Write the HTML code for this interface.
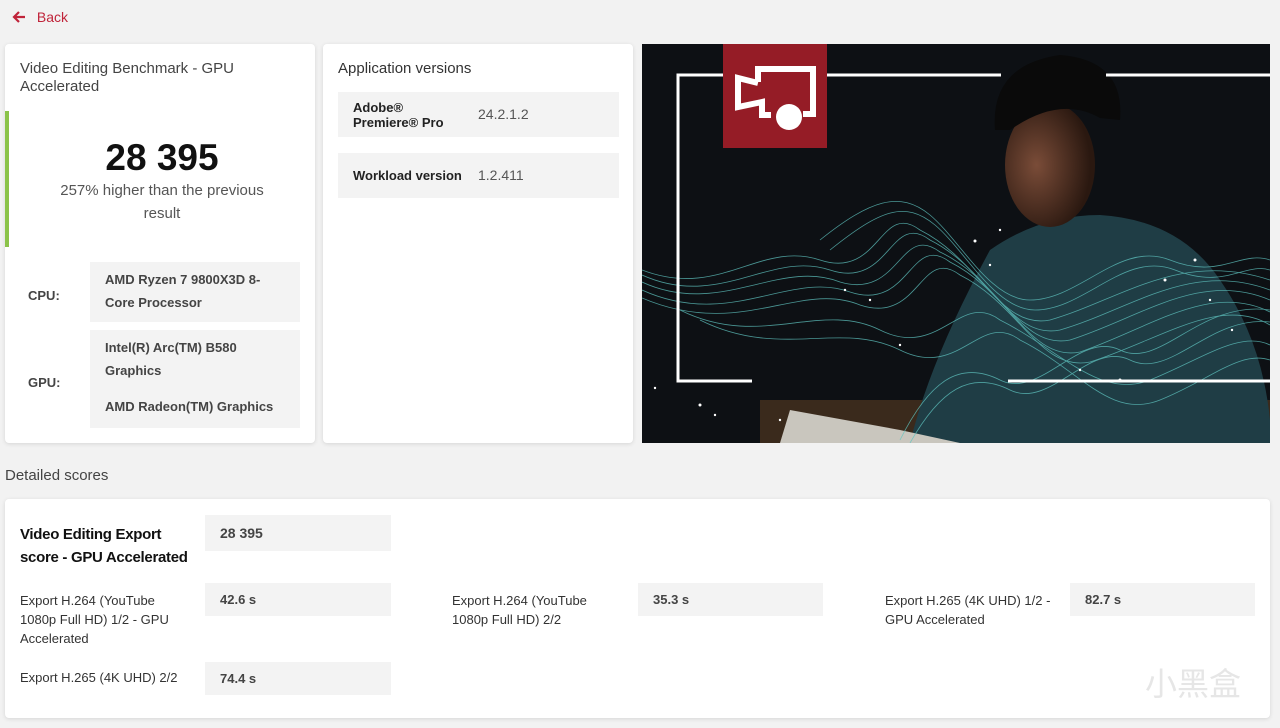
<!DOCTYPE html>
<html><head><meta charset="utf-8"><style>
*{box-sizing:border-box;margin:0;padding:0}
body{width:1280px;height:728px;background:#f2f2f2;font-family:"Liberation Sans","DejaVu Sans",sans-serif;position:relative;overflow:hidden;color:#222}
.card{position:absolute;background:#fff;border-radius:4px;box-shadow:0 1px 4px rgba(0,0,0,.12)}
.abs{position:absolute}
.grey{position:absolute;background:#f3f3f3}
.b{font-weight:bold}
</style></head><body>
<div class="abs" style="left:12px;top:9px;color:#c0243a;font-size:14px;">
<svg width="14" height="14" viewBox="0 0 14 14" style="vertical-align:-2px"><path d="M13 7H2M7 2L2 7l5 5" stroke="#c0243a" stroke-width="2.2" fill="none"/></svg>
<span style="margin-left:7px">Back</span></div>

<div class="card" style="left:5px;top:44px;width:310px;height:399px">
 <div class="abs" style="left:15px;top:16px;font-size:15px;color:#444;line-height:18px;width:260px">Video Editing Benchmark - GPU Accelerated</div>
 <div class="abs" style="left:0;top:67px;width:4px;height:136px;background:#8bc34a"></div>
 <div class="abs" style="left:0;top:93px;width:314px;text-align:center;font-size:37px;font-weight:bold;color:#111">28 395</div>
 <div class="abs" style="left:40px;top:135px;width:234px;text-align:center;font-size:15px;line-height:23px;color:#555">257% higher than the previous result</div>
 <div class="abs b" style="left:23px;top:244px;font-size:13px;color:#444">CPU:</div>
 <div class="grey" style="left:85px;top:218px;width:210px;height:60px"></div>
 <div class="abs b" style="left:100px;top:224px;font-size:13px;line-height:23px;color:#444;width:180px">AMD Ryzen 7 9800X3D 8-Core Processor</div>
 <div class="abs b" style="left:23px;top:331px;font-size:13px;color:#444">GPU:</div>
 <div class="grey" style="left:85px;top:286px;width:210px;height:98px"></div>
 <div class="abs b" style="left:100px;top:292px;font-size:13px;line-height:23px;color:#444;width:180px">Intel(R) Arc(TM) B580 Graphics</div>
 <div class="abs b" style="left:100px;top:355px;font-size:13px;color:#444">AMD Radeon(TM) Graphics</div>
</div>

<div class="card" style="left:323px;top:44px;width:310px;height:399px">
 <div class="abs" style="left:15px;top:16px;font-size:15px;color:#333">Application versions</div>
 <div class="grey" style="left:15px;top:48px;width:281px;height:45px"></div>
 <div class="abs b" style="left:30px;top:56px;font-size:13px;line-height:15px;color:#222">Adobe®<br>Premiere® Pro</div>
 <div class="abs" style="left:155px;top:62px;font-size:14px;color:#555">24.2.1.2</div>
 <div class="grey" style="left:15px;top:109px;width:281px;height:45px"></div>
 <div class="abs b" style="left:30px;top:124px;font-size:13px;color:#222">Workload version</div>
 <div class="abs" style="left:155px;top:123px;font-size:14px;color:#555">1.2.411</div>
</div>

<svg class="abs" style="left:642px;top:44px" width="628" height="399" viewBox="642 44 628 399">
 <defs>
  <radialGradient id="face" cx="0.35" cy="0.5" r="0.6"><stop offset="0" stop-color="#7a4c38"/><stop offset="1" stop-color="#2a1810"/></radialGradient>
 </defs>
 <rect x="642" y="44" width="628" height="399" fill="#0d1014"/>
 <rect x="760" y="400" width="510" height="43" fill="#3a2a1c"/>
 <path d="M990 250 Q1040 215 1100 215 Q1180 220 1220 280 Q1262 340 1270 420 L1270 443 L910 443 Q930 360 990 250Z" fill="#1f3d45"/>
 <ellipse cx="1050" cy="165" rx="45" ry="62" fill="url(#face)"/>
 <path d="M995 130 Q990 65 1060 55 Q1125 60 1120 120 L1100 118 Q1060 95 1010 130Z" fill="#0a0a0a"/>
 <path d="M790 410 L900 430 L960 443 L780 443Z" fill="#c9c6be"/>
 <g fill="none" stroke="#5fc4c0" stroke-width="0.8" opacity="0.75">
  <path d="M642 270 C720 300 760 240 820 260 C880 280 880 200 920 230 C980 260 1000 330 1050 320 C1120 300 1180 250 1270 280"/>
  <path d="M642 275 C720 310 770 250 830 270 C890 290 890 210 930 240 C990 270 1010 340 1060 330 C1130 310 1190 260 1270 290"/>
  <path d="M642 282 C720 318 780 258 840 282 C900 300 900 222 940 252 C1000 280 1020 350 1070 340 C1140 318 1200 270 1270 300"/>
  <path d="M642 290 C730 330 790 270 850 292 C910 312 910 232 950 262 C1010 292 1030 362 1080 352 C1150 328 1210 282 1270 312"/>
  <path d="M642 298 C740 340 800 280 860 305 C920 325 920 245 960 275 C1020 305 1040 372 1090 362 C1160 340 1220 295 1270 325"/>
  <path d="M680 310 C760 350 820 300 880 330 C940 360 960 290 1000 320 C1060 350 1100 400 1150 380 C1200 360 1240 330 1270 345"/>
  <path d="M700 320 C780 360 840 320 900 350 C960 380 980 310 1020 340 C1080 370 1110 420 1160 400 C1210 380 1240 350 1270 360"/>
  <path d="M820 240 C870 200 900 190 930 215 C960 240 990 300 1030 300 C1080 300 1120 240 1170 260 C1220 280 1240 250 1270 260"/>
  <path d="M830 250 C880 210 905 200 935 225 C965 250 995 310 1035 310 C1085 310 1125 250 1175 270 C1225 290 1245 262 1270 270"/>
  <path d="M900 440 C930 380 960 360 1000 380 C1040 400 1080 330 1120 350 C1160 370 1200 300 1270 310"/>
  <path d="M910 443 C940 390 970 370 1010 390 C1050 410 1090 340 1130 360 C1170 380 1210 315 1270 322"/>
 </g>
 <g fill="#fff">
  <circle cx="975" cy="241" r="1.5"/><circle cx="990" cy="265" r="1.2"/><circle cx="1000" cy="230" r="1.2"/><circle cx="1165" cy="280" r="1.5"/><circle cx="1195" cy="260" r="1.5"/><circle cx="1210" cy="300" r="1.2"/><circle cx="1232" cy="330" r="1.2"/><circle cx="700" cy="405" r="1.5"/><circle cx="715" cy="415" r="1.2"/><circle cx="655" cy="388" r="1.2"/><circle cx="870" cy="300" r="1.2"/><circle cx="900" cy="345" r="1.2"/><circle cx="1080" cy="370" r="1.2"/><circle cx="1120" cy="380" r="1.5"/><circle cx="780" cy="420" r="1.2"/><circle cx="845" cy="290" r="1.2"/>
 </g>
 <g stroke="#fff" stroke-width="3" fill="none">
  <path d="M752 381 H678 V75 H723"/>
  <path d="M827 75 H1001"/>
  <path d="M1106 75 H1270"/>
  <path d="M1008 381 H1270"/>
 </g>
 <rect x="723" y="44" width="104" height="104" fill="#951c26"/>
 <path d="M758 82 V69 H813 V114 H803 M771 115 H762 V102 L738 107 V78 L758 83" stroke="#fff" stroke-width="6" fill="none" stroke-linejoin="miter"/>
 <circle cx="789" cy="117" r="13" fill="#fff"/>
</svg>

<div class="abs" style="left:5px;top:467px;font-size:15px;color:#444">Detailed scores</div>

<div class="card" style="left:5px;top:499px;width:1265px;height:219px">
 <div class="abs b" style="left:15px;top:24px;font-size:15px;line-height:23px;color:#111;width:175px;letter-spacing:-0.3px">Video Editing Export score - GPU Accelerated</div>
 <div class="grey" style="left:200px;top:16px;width:186px;height:36px"></div>
 <div class="abs b" style="left:215px;top:26px;font-size:14px;color:#444">28 395</div>

 <div class="abs" style="left:15px;top:92px;font-size:13px;line-height:19px;color:#333;width:170px">Export H.264 (YouTube 1080p Full HD) 1/2 - GPU Accelerated</div>
 <div class="grey" style="left:200px;top:84px;width:186px;height:33px"></div>
 <div class="abs b" style="left:215px;top:93px;font-size:13px;color:#444">42.6 s</div>

 <div class="abs" style="left:447px;top:92px;font-size:13px;line-height:19px;color:#333;width:170px">Export H.264 (YouTube 1080p Full HD) 2/2</div>
 <div class="grey" style="left:633px;top:84px;width:185px;height:33px"></div>
 <div class="abs b" style="left:648px;top:93px;font-size:13px;color:#444">35.3 s</div>

 <div class="abs" style="left:880px;top:92px;font-size:13px;line-height:19px;color:#333;width:175px">Export H.265 (4K UHD) 1/2 - GPU Accelerated</div>
 <div class="grey" style="left:1065px;top:84px;width:185px;height:33px"></div>
 <div class="abs b" style="left:1080px;top:93px;font-size:13px;color:#444">82.7 s</div>

 <div class="abs" style="left:15px;top:171px;font-size:13px;color:#333">Export H.265 (4K UHD) 2/2</div>
 <div class="grey" style="left:200px;top:163px;width:186px;height:33px"></div>
 <div class="abs b" style="left:215px;top:172px;font-size:13px;color:#444">74.4 s</div>

 <div class="abs" style="left:1140px;top:160px;font-size:32px;color:#e6e6e6;font-family:'Liberation Sans','Noto Sans CJK SC',sans-serif">小黑盒</div>
</div>
</body></html>
